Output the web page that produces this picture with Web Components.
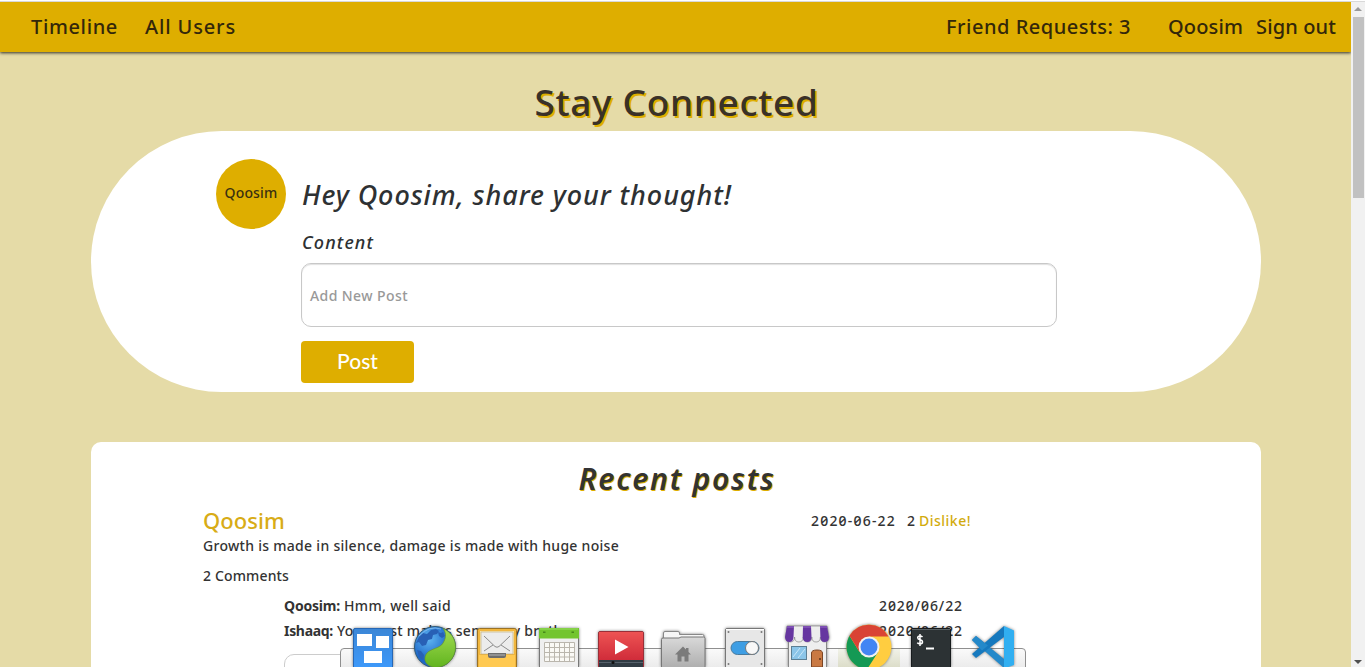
<!DOCTYPE html>
<html lang="en">
<head>
<meta charset="utf-8">
<title>Stay Connected</title>
<style>
  html, body { margin: 0; height: 667px; overflow: hidden; background: #e5dba7; }
  body { font-family: "Noto Sans", "Open Sans", sans-serif; color: #333; }
</style>
</head>
<body>
<social-app></social-app>
<script>
const define = (name, html, setup) => {
  const template = document.createElement('template');
  template.innerHTML = html.trim();
  customElements.define(name, class extends HTMLElement {
    connectedCallback() {
      if (this.shadowRoot) return;
      this.attachShadow({ mode: 'open' }).append(template.content.cloneNode(true));
      if (setup) setup(this, this.shadowRoot);
    }
  });
};

/* A single line of text, tracked so that it spans the width given in "w". */
define('tracked-text', `<style>:host{display:block;white-space:nowrap;flex:none;text-align:left} span{display:inline-block}</style><span><slot></slot></span>`, (el, root) => {
  const w = Number(el.getAttribute('w'));
  const span = root.querySelector('span');
  const natural = span.getBoundingClientRect().width;
  span.style.letterSpacing = ((w - natural) / el.textContent.length) + 'px';
  el.style.width = w + 'px';
});

define('nav-bar', `
  <style>
    :host{display:flex;box-sizing:border-box;flex:none;height:50px;padding:0 15px 0 31px;background:#deae00;
      box-shadow:0 1px 3px rgba(0,0,0,.8);font-size:20px;font-weight:500;line-height:50px;color:#33270a;position:relative}
    .left,.right{display:flex}
    .left{gap:27px}
    .right{margin-left:auto}
    .user{margin:0 13px 0 37px}
  </style>
  <div class="left"><tracked-text w="87">Timeline</tracked-text><tracked-text w="91">All Users</tracked-text></div>
  <div class="right"><tracked-text w="185">Friend Requests: 3</tracked-text>
  <tracked-text class="user" w="75">Qoosim</tracked-text><tracked-text w="80">Sign out</tracked-text></div>`);

define('user-avatar', `
  <style>
    :host{display:flex;align-items:center;justify-content:center;flex:none;width:70px;height:70px;border-radius:50%;
      background:#deae00;font-size:14px;font-weight:500;line-height:18px;color:#3b3010}
    tracked-text{padding-bottom:2px}
  </style><tracked-text w="53">Qoosim</tracked-text>`);

define('post-composer', `
  <style>
    :host{display:flex;box-sizing:border-box;flex:none;height:261px;margin:0 90px 0 91px;padding:28px 0 0 125px;
      background:#fff;border-radius:130.5px}
    form{display:flex;flex-direction:column;align-items:flex-start;margin-left:15px}
    h2{margin:17px 0 0 1px;height:40px;line-height:38px;font-size:27px;font-style:italic;font-weight:500;color:#2e3133}
    label{margin:12px 0 0 1px;height:35px;line-height:28px;font-size:18px;font-style:italic;font-weight:500;color:#2e3133}
    .field{box-sizing:border-box;width:756px;height:64px;padding:0 8px;border:1px solid #c8c8c8;border-radius:10px;
      box-shadow:inset 0 1px 1px rgba(0,0,0,.12);line-height:63px;font-size:14px;font-weight:500;color:#999}
    .post{display:flex;justify-content:center;width:113px;height:42px;margin-top:14px;border-radius:4px;background:#deae00;color:#fff;
      font-family:Lato,sans-serif;font-size:21px;font-weight:500;line-height:40px}
  </style>
  <user-avatar></user-avatar>
  <form>
    <h2><tracked-text w="430">Hey Qoosim, share your thought!</tracked-text></h2>
    <label><tracked-text w="72">Content</tracked-text></label>
    <div class="field"><tracked-text w="98">Add New Post</tracked-text></div>
    <div class="post"><tracked-text w="41">Post</tracked-text></div>
  </form>`);

define('post-comment', `
  <style>
    :host{display:flex;height:25px;line-height:25px}
    b{font-weight:700;margin-right:4px}
    time{margin-left:auto;font-feature-settings:"zero"}
  </style>
  <b><slot name="author"></slot></b><slot></slot>
  <time><tracked-text w="84">2020/06/22</tracked-text></time>`);

define('recent-posts', `
  <style>
    :host{display:block;box-sizing:border-box;flex:none;height:400px;margin:50px 90px 0 91px;padding:17px 112px 0;
      background:#fff;border-radius:10px;font-size:14px;font-weight:500;color:#333}
    h2{display:flex;justify-content:center;margin:0 0 0 2px;height:47px;line-height:40px;font-size:30px;font-style:italic;
      font-weight:600;text-shadow:1px 1px 0 #deae00}
    header{display:flex;width:768px;height:30px;line-height:30px}
    .author{font-size:22px;line-height:28px;font-weight:500;color:#d8ac16}
    .date{margin:0 11px 0 auto;font-feature-settings:"zero"}
    .likes{margin-right:4px}
    .link{color:#d2ab0e}
    p{margin:0;height:30px;line-height:20px}
    .count{height:22px}
    .comments{width:679px;margin:5px 0 0 81px}
    .reply{width:679px;height:60px;margin-top:11px;border:1px solid #ccc;border-radius:10px}
  </style>
  <h2><tracked-text w="197">Recent posts</tracked-text></h2>
  <header>
    <tracked-text class="author" w="82">Qoosim</tracked-text>
    <tracked-text class="date" w="85">2020-06-22</tracked-text>
    <tracked-text class="likes" w="8">2</tracked-text>
    <tracked-text class="link" w="52">Dislike!</tracked-text>
  </header>
  <p><tracked-text w="416">Growth is made in silence, damage is made with huge noise</tracked-text></p>
  <p class="count"><tracked-text w="86">2 Comments</tracked-text></p>
  <div class="comments">
    <post-comment><tracked-text slot="author" w="56">Qoosim:</tracked-text><tracked-text w="107">Hmm, well said</tracked-text></post-comment>
    <post-comment><tracked-text slot="author" w="49">Ishaaq:</tracked-text><tracked-text w="240">Your post makes sense my brother</tracked-text></post-comment>
    <div class="reply"></div>
  </div>`);

define('scroll-bar', `
  <style>
    :host{display:flex;flex-direction:column;align-items:center;width:14px;height:665px;background:#f1f1f1}
    i{flex:none;border:4px solid transparent}
    .up{margin-top:2px;border-bottom-color:#999;border-top-width:3px}
    .thumb{width:11px;height:181px;margin-top:6px;background:#c1c1c1}
    .down{margin:auto 0 3px;border-top-color:#505050;border-bottom-width:0}
  </style><i class="up"></i><div class="thumb"></div><i class="down"></i>`);

define('dock-bar', `
  <style>
    :host{position:absolute;left:340px;top:620px;width:686px;height:47px}
    .panel{position:absolute;inset:28px 0 -4px 0;box-sizing:border-box;border:1px solid #8f8f8f;border-radius:4px 4px 0 0;
      background:linear-gradient(#fafafa,#e9e9e9)}
    .glow{position:absolute;left:498px;top:29px;width:62px;height:18px;background:linear-gradient(#f1f2e8,#dcddc9)}
    .icons{position:relative;display:flex;padding-left:2px}
    svg{display:block;flex:none;width:62px;height:47px;overflow:hidden;filter:drop-shadow(0 0 1.5px rgba(0,0,0,.5))}
  </style>
  <div class="panel"></div><div class="glow"></div>
  <div class="icons">
    <svg viewBox="0 0 62 47"><defs><linearGradient id="a" x2="0" y2="1"><stop stop-color="#3b86d6"/><stop offset="1" stop-color="#3d9bff"/></linearGradient></defs>
      <rect x="11.5" y="8.5" width="39" height="45" rx="1.5" fill="url(#a)" stroke="#2667b5"/>
      <path fill="#fff" d="M15 14h15v12H15zM34 16h13v12H34zM22 31h18v12H22z"/></svg>
    <svg viewBox="0 0 62 47"><defs><radialGradient id="b" cx=".35" cy=".3"><stop stop-color="#61b7f2"/><stop offset="1" stop-color="#1d67c8"/></radialGradient><linearGradient id="b2" x2="0" y2="1"><stop stop-color="#a2dc51"/><stop offset="1" stop-color="#61b41f"/></linearGradient></defs>
      <circle cx="31" cy="27" r="20.5" fill="url(#b)" stroke="#315c79"/>
      <path fill="#2860b5" d="M15 17l4-4 4 1 4-4 5-1 3 2-2 3-4 1-1 4-4 1-2 5-4 1-3-4-3 1zM34 12l3 1 2-1 2 4-3 2-3-2zM13 30l4 1 3 4-1 5-4-3z"/>
      <path fill="url(#b2)" d="M39 8.500C47 12 51.500 19 51.500 27 51.500 39 42 47.500 31 47.500 22 46 19 40 22 34.500 25 29 33 29 37.500 25 42 20 43 13 39 8.500Z" stroke="#67942a" stroke-width=".7"/>
      <path d="M15 16Q25 5 37 9" fill="none" stroke="#a7d7f8" opacity=".6"/></svg>
    <svg viewBox="0 0 62 47"><rect x="11.5" y="8.5" width="39" height="45" rx="2" fill="#f1b63e" stroke="#9b7224"/>
      <path fill="#ffc951" d="M13 35h36v12H13z"/><path fill="#fbe7ab" d="M14 11h34v23H14z"/>
      <rect x="15" y="12" width="32" height="22" fill="#ececec" stroke="#b9a77b" stroke-width=".6"/>
      <path d="M18 16l11 10.500q2 1.500 4 0L44 16M18 31l9-6M44 31l-9-6" fill="none" stroke="#8b8b8b"/>
      <path fill="#6d6d6d" d="M22 33h18v3q0 2-2 2H24q-2 0-2-2z"/><path fill="#b7b7b7" d="M23 34.5h16v1H23z"/></svg>
    <svg viewBox="0 0 62 47"><rect x="11.5" y="8.5" width="39" height="45" rx="1.5" fill="#efefef" stroke="#777"/>
      <path fill="#73c52f" d="M11 8h40v10.500H11z"/><path fill="#98dd63" d="M12 8.500h38v1H12z"/>
      <path fill="#47891a" d="M15 11.500h2.500v1.500H15zM43.500 11.500H46v1.500h-2.500z"/>
      <rect x="16" y="22" width="30" height="20" fill="#faf9f5"/>
      <path d="M16.500 22.500h30v19h-30zM21.500 22.500v19M26.500 22.500v19M31.500 22.500v19M36.500 22.500v19M41.500 22.500v19M16.500 27.500h30M16.500 32.500h30M16.500 37h30" fill="none" stroke="#bab6ad"/></svg>
    <svg viewBox="0 0 62 47"><defs><linearGradient id="c" x2="0" y2="1"><stop stop-color="#ed5353"/><stop offset="1" stop-color="#d02c3a"/></linearGradient></defs>
      <rect x="8.500" y="11.500" width="45" height="45" rx="1.500" fill="#34404a" stroke="#9a2f38"/><path fill="url(#c)" d="M9 12h44v28H9z"/>
      <path fill="#fff" d="M25 19.500v15L38.500 27z"/><path fill="#303b43" d="M9 40h44v7H9z"/><path stroke="#56616a" d="M9 42.500h44"/><circle cx="23" cy="42.500" r="1.500" fill="#111"/></svg>
    <svg viewBox="0 0 62 47"><defs><linearGradient id="d" x2="0" y2="1"><stop stop-color="#d9d9d9"/><stop offset="1" stop-color="#a2a2a2"/></linearGradient></defs>
      <path d="M11.500 17v-4q0-1.500 1.500-1.500h13q1.500 0 1.500 1.500v1.500h23q1.500 0 1.500 1.500v4h-40z" fill="#f6f6f6" stroke="#888"/>
      <path d="M9.500 19.500q0-1.500 1.500-1.500H27l2-1h22.500q1.500 0 1.500 1.500v38H9.500z" fill="url(#d)" stroke="#777"/>
      <path fill="#7b7b7b" d="M31 26.500l-8 8h2.500v7h4v-5h3v5h4v-7H39l-2.500-2.500V28H34v1.500z"/></svg>
    <svg viewBox="0 0 62 47"><rect x="11.500" y="8.500" width="39" height="45" rx="1.500" fill="#e7e7e7" stroke="#777"/>
      <path stroke="#fff" d="M12 9.500h38"/><g fill="#777"><circle cx="14.500" cy="12" r="1"/><circle cx="47.500" cy="12" r="1"/><circle cx="14.500" cy="44" r="1"/><circle cx="47.500" cy="44" r="1"/></g>
      <rect x="17" y="21.500" width="28" height="13" rx="6.500" fill="#3e9ee4" stroke="#487b9f"/><circle cx="38" cy="28" r="6.500" fill="#f8f8f8" stroke="#777"/></svg>
    <svg viewBox="0 0 62 47"><path fill="#eee" stroke="#888" d="M12.500 16h38v34h-38z"/>
      <path fill="#ededed" stroke="#888" stroke-width=".7" d="M11 6h40l2 11q0 5-4.300 5t-4.300-5q0 5-4.300 5t-4.300-5q0 5-4.300 5t-4.300-5q0 5-4.300 5t-4.300-5q0 5-4.300 5t-4.300-5z"/>
      <path fill="#6636a0" d="M11 6h7l-.500 11q-.200 5-4.200 5T9 17zM27 6h8l.500 11q0 5-4.300 5t-4.500-5zM44 6h7l2 11q0 5-4.300 5t-4.300-5z"/>
      <path stroke="#9769c8" d="M11 7h7M27 7h8M44 7h7"/><rect x="15.500" y="26.500" width="15" height="13" fill="#8bc5e8" stroke="#5c7f93"/>
      <path stroke="#c9e7f8" d="M17 37l7-9M22 38l7-9"/><path d="M35.500 47V33q0-3 5.500-3t5.500 3v14z" fill="#c97943" stroke="#7a4525"/><circle cx="44" cy="39" r="1" fill="#5a3018"/></svg>
    <svg viewBox="0 0 62 47"><circle cx="31" cy="27" r="22.500" fill="#ffcd40"/>
      <path fill="#d94335" d="M31 27L11.500 15.800A22.500 22.500 0 0 1 50.500 16.500H31z"/>
      <path fill="#149954" d="M11.500 15.800A22.500 22.500 0 0 0 29 49.400L40 32.200 31 27 21.500 32z"/>
      <path fill="#d94335" d="M11.500 15.800L21.500 32 31 27V16.500z"/>
      <circle cx="31" cy="27" r="10.500" fill="#f1f1f1"/><circle cx="31" cy="27" r="8.500" fill="#4285f4"/></svg>
    <svg viewBox="0 0 62 47"><rect x="11.500" y="8.500" width="39" height="45" rx="1.500" fill="#2c3234" stroke="#171b1d"/><path stroke="#586063" d="M12 9.500h38"/>
      <path d="M22.500 17q-1-1-2.500-1-2.300 0-2.300 1.800 0 1.400 2.300 1.900 2.500.5 2.500 2.200 0 1.900-2.500 1.900-1.700 0-2.800-1M20 14v12" fill="none" stroke="#fff" stroke-width="1.500"/><path fill="#fff" d="M26 27.500h8v2h-8z"/></svg>
    <svg viewBox="0 0 62 47"><path fill="#2489ca" d="M10 20l4-4 28 23v9z"/>
      <path fill="#1679be" d="M10 34l4 4L42 17V6z"/>
      <path fill="#2489ca" d="M10 20l4-4 12 9.500-6 5z"/>
      <path fill="#31aff1" d="M42 6l10 4.500V45l-10 3.500z"/></svg>
  </div>`);

define('social-app', `
  <style>
    :host{display:flex;flex-direction:column;position:relative;width:1365px;height:667px;overflow:hidden;background:#e5dba7}
    .edge{flex:none;height:1px;background:#fff;border-bottom:1px solid #d9d9d9}
    .view{display:flex;height:665px}
    main{display:flex;flex-direction:column;width:1351px;height:665px;overflow:hidden}
    h1{display:flex;flex:none;justify-content:center;margin:24px 0 0 2px;height:55px;line-height:51px;font-size:37px;font-weight:500;
      color:#3a3128;text-shadow:2px 2px 0 #deae00}
  </style>
  <div class="edge"></div>
  <div class="view">
    <main>
      <nav-bar></nav-bar>
      <h1><tracked-text w="284">Stay Connected</tracked-text></h1>
      <post-composer></post-composer>
      <recent-posts></recent-posts>
    </main>
    <scroll-bar></scroll-bar>
  </div>
  <dock-bar></dock-bar>`);
</script>
</body>
</html>
